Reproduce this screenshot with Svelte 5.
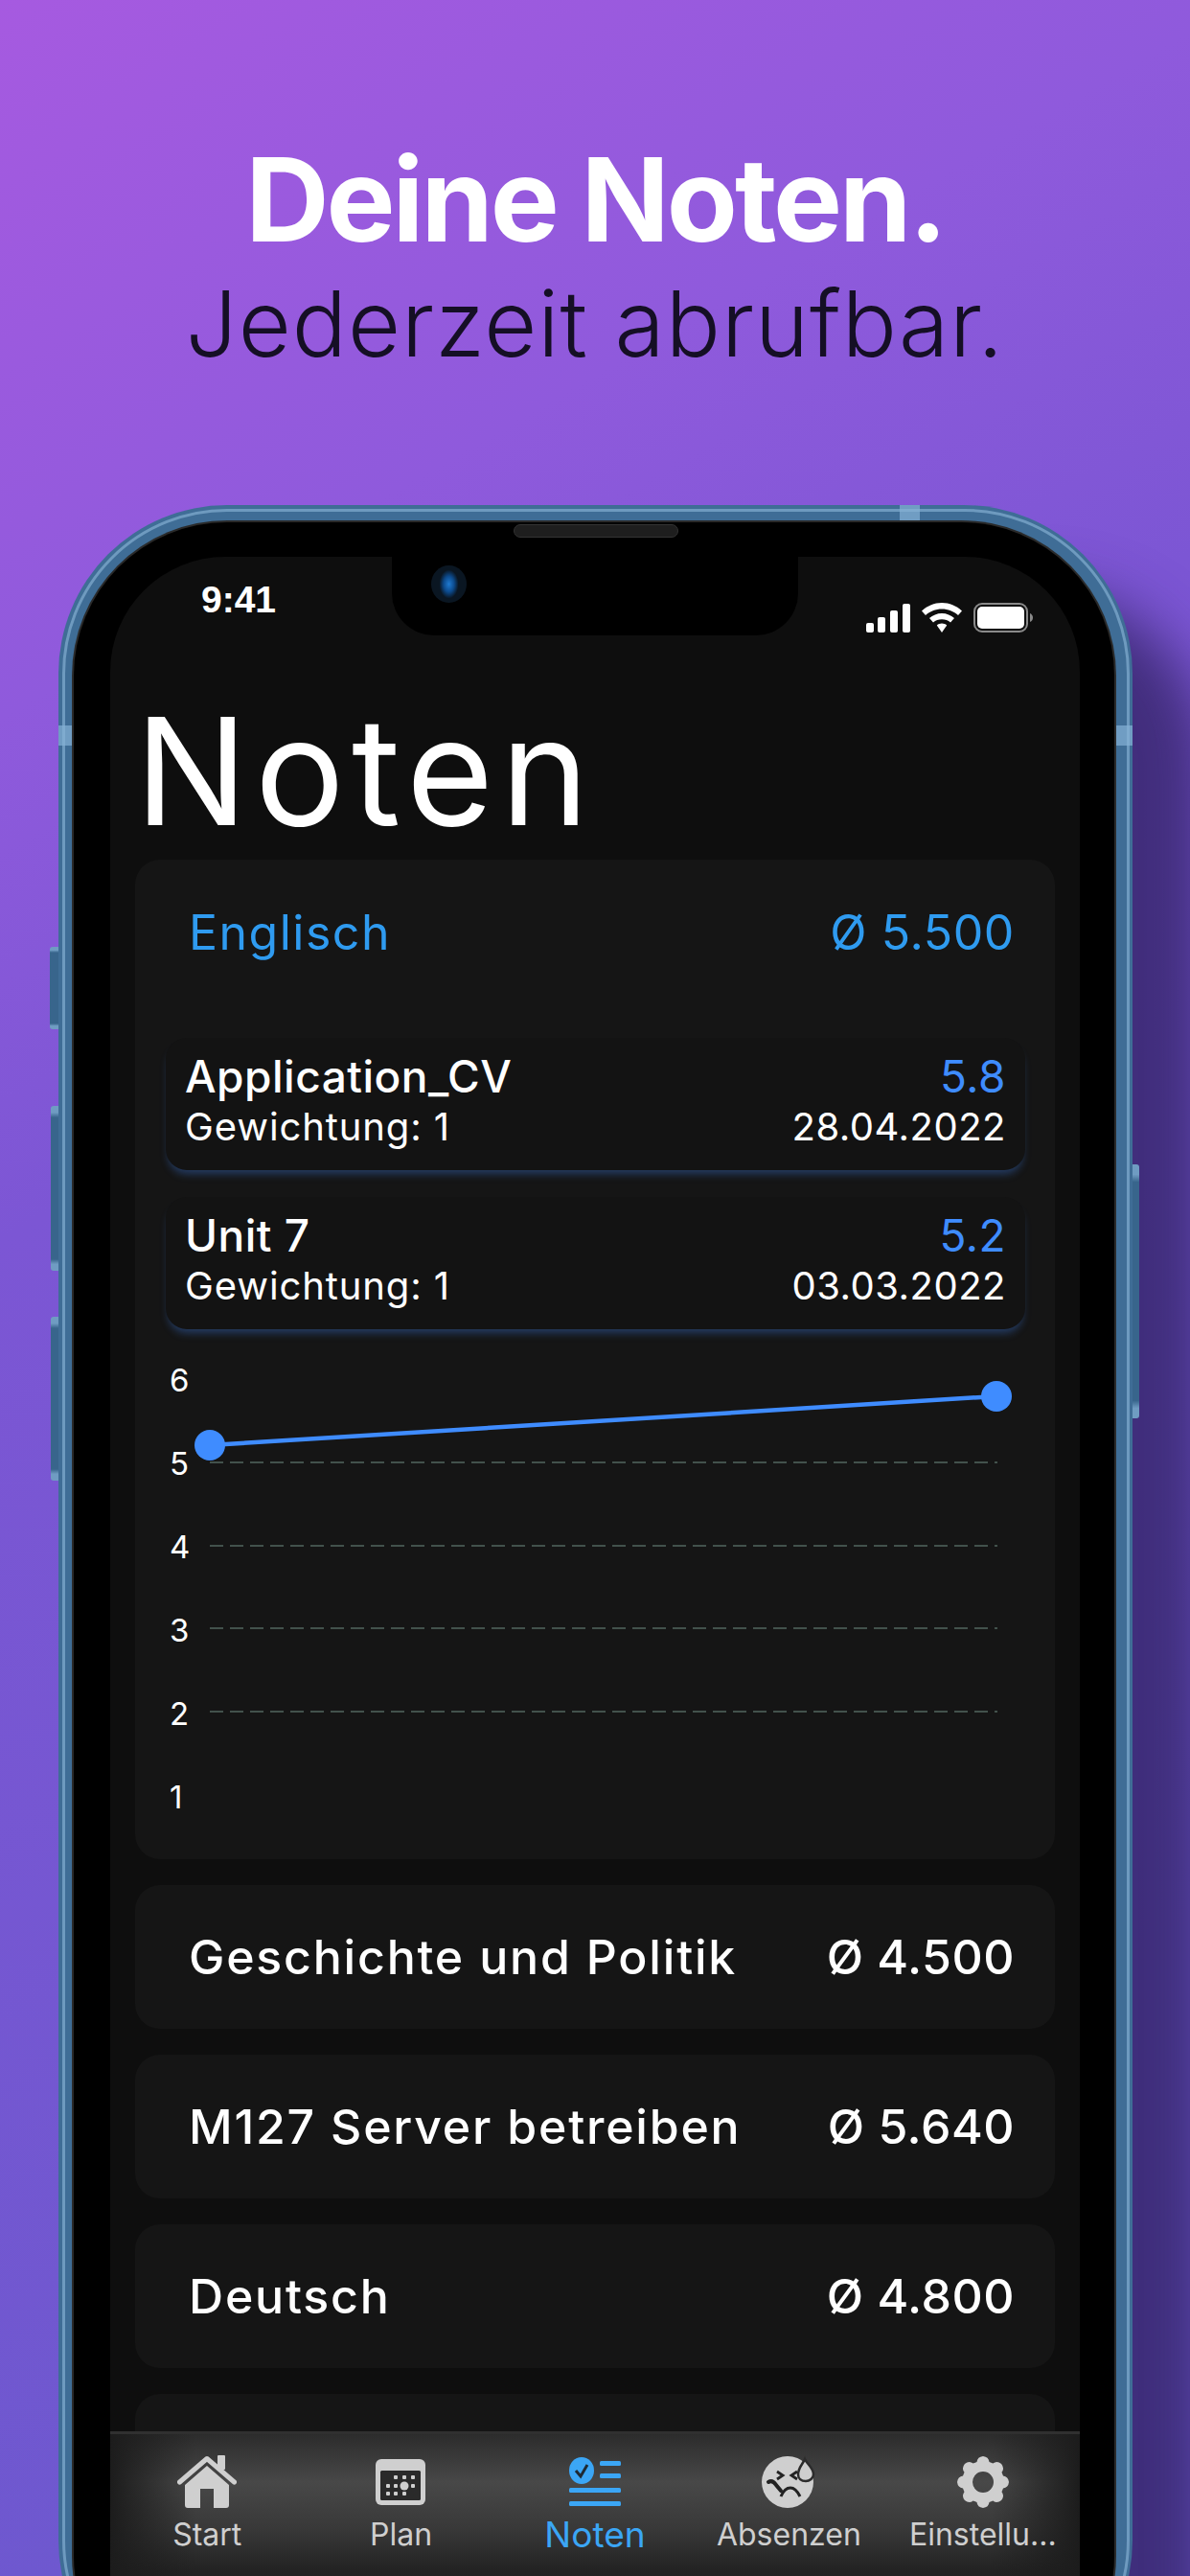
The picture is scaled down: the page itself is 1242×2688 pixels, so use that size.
<script>
  const grades = [
    { name: 'Application_CV', weight: 1, grade: '5.8', date: '28.04.2022' },
    { name: 'Unit 7', weight: 1, grade: '5.2', date: '03.03.2022' }
  ];
  const subjects = [
    { name: 'Geschichte und Politik', avg: '4.500' },
    { name: 'M127 Server betreiben', avg: '5.640' },
    { name: 'Deutsch', avg: '4.800' }
  ];
  const axis = [6, 5, 4, 3, 2, 1];
  const tabs = ['Start', 'Plan', 'Noten', 'Absenzen', 'Einstellu...'];
  const calDots = [[21, 19], [30, 19], [39, 19], [13, 28], [21, 28], [39, 28], [13, 36], [21, 36], [30, 36]];

  // gear outline, 8 rounded teeth
  function gearPath() {
    const pts = [];
    for (let i = 0; i < 8; i++) {
      const a = (i * Math.PI) / 4 - Math.PI / 2;
      const at = (r, off) => `${(27 + r * Math.cos(a + off)).toFixed(1)} ${(27 + r * Math.sin(a + off)).toFixed(1)}`;
      pts.push(`${i === 0 ? 'M' : 'L'}${at(22, -0.3)}Q${at(27, -0.22)} ${at(27, 0)}Q${at(27, 0.22)} ${at(22, 0.3)}`);
    }
    return pts.join('') + 'ZM27 16A11 11 0 1 0 27 38A11 11 0 1 0 27 16Z';
  }
</script>

<div class="page">
  <header class="hero">
    <h1>Deine Noten.</h1>
    <p>Jederzeit abrufbar.</p>
  </header>

  <div class="phone">
    <span class="side mute"></span>
    <span class="side volup"></span>
    <span class="side voldown"></span>
    <span class="side power"></span>
    <span class="rim"></span>
    <span class="band band-top"></span>
    <span class="band band-left"></span>
    <span class="band band-right"></span>

    <div class="bezel">
      <span class="speaker"></span>
      <div class="screen">
        <div class="notch"><span class="camera"></span></div>

        <div class="status">
          <span class="time">9:41</span>
          <div class="status-icons">
            <svg width="46" height="30" viewBox="0 0 46 30" fill="#fff">
              <rect x="0" y="20" width="8" height="10" rx="2" />
              <rect x="12" y="14" width="8" height="16" rx="2" />
              <rect x="25" y="7" width="8" height="23" rx="2" />
              <rect x="38" y="0" width="8" height="30" rx="2" />
            </svg>
            <svg width="42" height="31" viewBox="0 0 42 31" fill="#fff">
              <path d="M21 0C13 0 6 3 0 8.500L4 13C8.500 9 14.500 6.500 21 6.500S33.500 9 38 13L42 8.500C36 3 29 0 21 0Z" />
              <path d="M21 11C16 11 11.500 13 8 16L12 20.500C14.500 18.500 17.500 17.300 21 17.300S27.500 18.500 30 20.500L34 16C30.500 13 26 11 21 11Z" />
              <path d="M21 21.500C19 21.500 17.200 22.200 15.800 23.400L21 31L26.200 23.400C24.800 22.200 23 21.500 21 21.500Z" />
            </svg>
            <svg width="62" height="31" viewBox="0 0 62 31">
              <rect x="1" y="1" width="55" height="29" rx="8" fill="none" stroke="#8a8a8a" stroke-width="2" />
              <rect x="4" y="4" width="49" height="23" rx="5" fill="#fff" />
              <path d="M59 11C61 12 62 13.500 62 15.500S61 19 59 20Z" fill="#8a8a8a" />
            </svg>
          </div>
        </div>

        <h2 class="title">Noten</h2>

        <section class="card open">
          <div class="subject-head">
            <span class="name">Englisch</span>
            <span>Ø 5.500</span>
          </div>

          {#each grades as g}
            <div class="grade">
              <div class="grade-line top">
                <span>{g.name}</span>
                <span class="value">{g.grade}</span>
              </div>
              <div class="grade-line">
                <span class="weight">Gewichtung: {g.weight}</span>
                <span>{g.date}</span>
              </div>
            </div>
          {/each}

          <div class="chart">
            <div class="axis">
              {#each axis as n}
                <span>{n}</span>
              {/each}
            </div>
            <svg class="plot" width="870" height="440" viewBox="0 0 870 440">
              {#each [87, 174, 260, 347] as y}
                <line x1="24" x2="846" y1={y} y2={y} stroke="#52655f" stroke-width="1.500" stroke-dasharray="14 7" />
              {/each}
              <line x1="24" y1="69" x2="845" y2="18" stroke="#3f8cff" stroke-width="4.500" />
              <circle cx="24" cy="69" r="16" fill="#3f8cff" />
              <circle cx="845" cy="18" r="16" fill="#3f8cff" />
            </svg>
          </div>
        </section>

        {#each subjects as s}
          <section class="card row">
            <span class="name">{s.name}</span>
            <span>Ø {s.avg}</span>
          </section>
        {/each}
        <section class="card row"></section>

        <nav class="tabbar">
          {#each tabs as tab, i}
            <div class="tab" class:active={i === 2}>
              {#if i === 0}
                <svg width="62" height="56" viewBox="0 0 62 56" fill="#cfcfcf">
                  <path d="M2.500 28L31 3.500L59.500 28" fill="none" stroke="#cfcfcf" stroke-width="5" stroke-linejoin="round" stroke-linecap="round" />
                  <rect x="42" y="0" width="8" height="15" rx="1" />
                  <path d="M31 11L54 31V52Q54 55 51 55H38V35H24V55H11Q8 55 8 52V31Z" />
                </svg>
              {:else if i === 1}
                <svg width="54" height="56" viewBox="0 0 54 48">
                  <rect x="0" y="0" width="52" height="48" rx="6" fill="#cfcfcf" />
                  <rect x="5" y="12" width="42" height="31" rx="1.500" fill="#2a2a2a" />
                  {#each calDots as d}
                    <rect x={d[0] - 2} y={d[1] - 2} width="4" height="4" rx="1" fill="#cfcfcf" />
                  {/each}
                  <circle cx="30" cy="28" r="4.500" fill="#cfcfcf" />
                </svg>
              {:else if i === 2}
                <svg width="54" height="52" viewBox="0 0 54 52" fill="#3ba6f5">
                  <ellipse cx="13" cy="14" rx="13" ry="14" />
                  <path d="M7 14L12 20L19 8" fill="none" stroke="#1e2a33" stroke-width="3" />
                  <rect x="32" y="4" width="22" height="5" rx="1.500" />
                  <rect x="32" y="17" width="22" height="5" rx="1.500" />
                  <rect x="0" y="32" width="54" height="5" rx="1.500" />
                  <rect x="0" y="46" width="54" height="5" rx="1.500" />
                </svg>
              {:else if i === 3}
                <svg width="56" height="54" viewBox="0 0 56 54">
                  <circle cx="27" cy="27" r="27" fill="#cfcfcf" />
                  <path d="M45 3C47 8 54 12 54 19C54 23 50 26 46 26C41 26 38 23 38 19C38 12 43 8 45 3Z" fill="#cfcfcf" stroke="#2c2c2c" stroke-width="2.500" />
                  <path d="M16 16L22 20L16 24M37 16L31 20L37 24" stroke="#222" stroke-width="2.800" fill="none" />
                  <path d="M20 42C23 35 26 33 30 33S37 36 40 42" stroke="#222" stroke-width="3" fill="none" />
                  <path d="M7 27C10 25 13 27 15 30L20 36" stroke="#222" stroke-width="4" stroke-linecap="round" fill="none" />
                </svg>
              {:else}
                <svg width="54" height="54" viewBox="0 0 54 54">
                  <path fill="#cfcfcf" fill-rule="evenodd" d={gearPath()} />
                </svg>
              {/if}
              <span>{tab}</span>
            </div>
          {/each}
        </nav>
      </div>
    </div>
  </div>
</div>

<style>
  :global(body) {
    margin: 0;
  }
  .page {
    width: 1242px;
    height: 2688px;
    overflow: hidden;
    background: linear-gradient(150deg, #a65ae0 0%, #8f5adc 22%, #7c56d4 38%, #6e58cf 80%);
    font-family: Inter, "Noto Sans", sans-serif;
  }
  .hero {
    height: 527px;
    box-sizing: border-box;
    padding-top: 141px;
    text-align: center;
  }
  .hero h1 {
    margin: 0;
    font-size: 121px;
    line-height: 135px;
    font-weight: 700;
    letter-spacing: -3px;
    color: #fff;
  }
  .hero p {
    margin: 6px 0 0;
    font-size: 95px;
    line-height: 112px;
    font-weight: 300;
    letter-spacing: 1px;
    color: #150f25;
  }
  .phone {
    position: relative;
    width: 1121px;
    height: 2300px;
    margin-left: 61px;
    box-sizing: border-box;
    padding: 18px 19px 0 16px;
    border-radius: 176px;
    background: #3f6d96;
    box-shadow: 78px 90px 60px rgba(50, 35, 100, 0.78);
  }
  .rim {
    position: absolute;
    inset: 4px 3px 4px 4px;
    border: 3px solid #7fa9cc;
    border-radius: 172px;
    opacity: 0.75;
  }
  .side {
    position: absolute;
    background: linear-gradient(180deg, #6f9cc2 0, #6f9cc2 4%, #38658c 7%, #38658c 93%, #6f9cc2 96%, #6f9cc2 100%);
    border-radius: 3px 0 0 3px;
  }
  .mute {
    left: -9px;
    top: 461px;
    width: 9px;
    height: 86px;
  }
  .volup {
    left: -8px;
    top: 627px;
    width: 8px;
    height: 172px;
  }
  .voldown {
    left: -8px;
    top: 847px;
    width: 8px;
    height: 171px;
  }
  .power {
    right: -7px;
    top: 688px;
    width: 7px;
    height: 265px;
    border-radius: 0 3px 3px 0;
  }
  .band {
    position: absolute;
    background: #86b2d6;
    opacity: 0.7;
  }
  .band-top {
    left: 878px;
    top: 0;
    width: 21px;
    height: 16px;
  }
  .band-left {
    left: 0;
    top: 230px;
    width: 16px;
    height: 21px;
  }
  .band-right {
    right: 0;
    top: 230px;
    width: 19px;
    height: 21px;
  }
  .bezel {
    position: relative;
    height: 100%;
    box-sizing: border-box;
    padding: 36px 36px 0 38px;
    background: #000;
    border-radius: 160px;
    box-shadow: 0 0 0 2px #2a2a2a;
  }
  .speaker {
    position: absolute;
    left: 459px;
    top: 2px;
    width: 172px;
    height: 14px;
    background: #1e1e1e;
    border: 1px solid #333;
    box-sizing: border-box;
    border-radius: 8px;
  }
  .screen {
    position: relative;
    height: 100%;
    background: #0e0e0e;
    border-radius: 120px 120px 0 0;
    overflow: hidden;
  }
  .notch {
    position: absolute;
    left: 294px;
    top: 0;
    width: 424px;
    height: 82px;
    background: #000;
    border-radius: 0 0 44px 44px;
  }
  .camera {
    position: absolute;
    left: 41px;
    top: 9px;
    width: 37px;
    height: 39px;
    border-radius: 50%;
    background: radial-gradient(ellipse 10px 15px at center, #1f7ad0 0, #0c4a8c 55%, #0a1622 100%);
  }
  .status {
    display: flex;
    justify-content: space-between;
    align-items: flex-start;
    height: 132px;
    padding: 22px 49px 0 95px;
    box-sizing: border-box;
  }
  .time {
    font-family: "Liberation Sans", sans-serif;
    font-size: 39px;
    line-height: 46px;
    font-weight: 700;
    color: #fff;
  }
  .status-icons {
    display: flex;
    gap: 12px;
    align-items: flex-end;
    margin-top: 26px;
  }
  .title {
    margin: 0 0 0 26px;
    font-size: 156px;
    line-height: 184px;
    font-weight: 400;
    letter-spacing: 7.500px;
    color: #fff;
  }
  .card {
    margin: 0 26px 27px;
    background: #151515;
    border-radius: 26px;
    color: #fff;
    font-size: 50px;
  }
  .open {
    margin-top: 0;
    height: 1043px;
    box-sizing: border-box;
    padding-top: 36px;
  }
  .subject-head {
    display: flex;
    justify-content: space-between;
    padding: 0 42px 0 56px;
    line-height: 80px;
    color: #2f9bf0;
    letter-spacing: 0.600px;
    margin-bottom: 70px;
  }
  .subject-head .name {
    letter-spacing: 1.500px;
  }
  .grade {
    height: 138px;
    margin: 0 31px 28px 32px;
    padding: 12px 20px 0 20px;
    box-sizing: border-box;
    background: #131313;
    border-radius: 22px;
    box-shadow: 0 7px 9px -3px rgba(60, 120, 220, 0.4);
  }
  .grade-line {
    display: flex;
    justify-content: space-between;
    font-size: 40px;
    line-height: 50px;
    letter-spacing: 0.500px;
  }
  .grade-line .weight {
    letter-spacing: 0.900px;
  }
  .grade-line.top {
    font-size: 46px;
    font-weight: 500;
    line-height: 56px;
  }
  .value {
    color: #3f8cff;
    font-weight: 400;
  }
  .chart {
    position: relative;
    margin-top: 52px;
    padding-left: 54px;
  }
  .axis {
    position: absolute;
    left: 36px;
    top: -19px;
    display: flex;
    flex-direction: column;
    gap: 47px;
    font-size: 33px;
    line-height: 40px;
  }
  .plot {
    display: block;
  }
  .row {
    display: flex;
    justify-content: space-between;
    align-items: center;
    height: 150px;
    box-sizing: border-box;
    padding: 0 42px 0 56px;
    font-weight: 500;
    letter-spacing: 0.500px;
  }
  .row .name {
    letter-spacing: 1.800px;
  }
  .tabbar {
    position: absolute;
    left: 0;
    right: 0;
    top: 1956px;
    height: 200px;
    display: grid;
    grid-template-columns: repeat(5, 1fr);
    border-top: 3px solid #303030;
    background:
      linear-gradient(90deg, #1c1c1c 0, rgba(28, 28, 28, 0) 90px, rgba(28, 28, 28, 0) 920px, #1c1c1c 100%),
      linear-gradient(180deg, #2c2c2c 0, #484848 25%, #383838 50%, #222 72%, #1c1c1c 100%);
  }
  .tab {
    display: flex;
    flex-direction: column;
    align-items: center;
    padding-top: 22px;
    color: #cfcfcf;
    font-size: 32px;
    line-height: 40px;
    white-space: nowrap;
  }
  .tab svg {
    display: block;
    height: 56px;
    margin-bottom: 7px;
  }
  .tab.active {
    color: #3ba6f5;
    font-size: 37px;
  }
</style>
